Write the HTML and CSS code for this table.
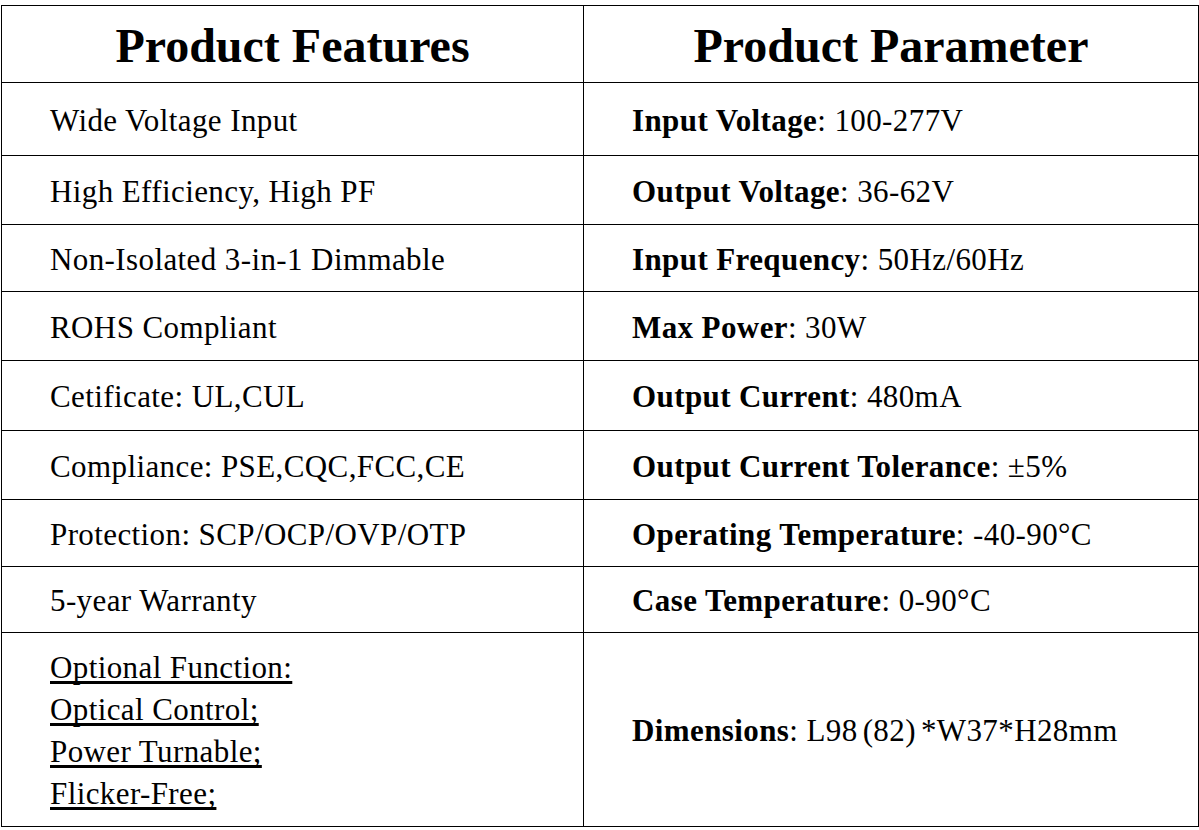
FILE: index.html
```html
<!DOCTYPE html>
<html>
<head>
<meta charset="utf-8">
<link rel="stylesheet" href="styles.css">
</head>
<body>
<table class="spec">
  <colgroup><col class="c-left"><col class="c-right"></colgroup>
  <thead>
    <tr class="r-head"><th>Product Features</th><th>Product Parameter</th></tr>
  </thead>
  <tbody>
    <tr class="r1"><td class="feat">Wide Voltage Input</td><td class="param"><b>Input Voltage</b>: 100-277V</td></tr>
    <tr class="r2"><td class="feat">High Efficiency, High PF</td><td class="param"><b>Output Voltage</b>: 36-62V</td></tr>
    <tr class="r3"><td class="feat">Non-Isolated 3-in-1 Dimmable</td><td class="param"><b>Input Frequency</b>: 50Hz/60Hz</td></tr>
    <tr class="r4"><td class="feat">ROHS Compliant</td><td class="param"><b>Max Power</b>: 30W</td></tr>
    <tr class="r5"><td class="feat">Cetificate: UL,CUL</td><td class="param"><b>Output Current</b>: 480mA</td></tr>
    <tr class="r6"><td class="feat">Compliance: PSE,CQC,FCC,CE</td><td class="param"><b>Output Current Tolerance</b>: ±5%</td></tr>
    <tr class="r7"><td class="feat">Protection: SCP/OCP/OVP/OTP</td><td class="param"><b>Operating Temperature</b>: -40-90°C</td></tr>
    <tr class="r8"><td class="feat">5-year Warranty</td><td class="param"><b>Case Temperature</b>: 0-90°C</td></tr>
    <tr class="r9">
      <td class="feat opt">
        <span class="u">Optional Function:</span><br>
        <span class="u">Optical Control;</span><br>
        <span class="u">Power Turnable;</span><br>
        <span class="u">Flicker-Free;</span>
      </td>
      <td class="param"><b>Dimensions</b>: L98<span class="gap"> </span>(82)<span class="gap"> </span>*W37*H28mm</td>
    </tr>
  </tbody>
</table>
</body>
</html>
```

FILE: styles.css
```css
html, body {
  margin: 0;
  padding: 0;
  background: #fff;
}
body {
  padding: 5px 0 0 1px;
  font-family: "Liberation Serif", "Times New Roman", serif;
  color: #000;
}
.spec {
  border-collapse: collapse;
  table-layout: fixed;
  width: 1197px;
}
.c-left { width: 582px; }
.c-right { width: 615px; }
.spec th, .spec td {
  border: 1px solid #000;
  padding: 0;
  vertical-align: middle;
}
.spec th {
  font-size: 48px;
  font-weight: bold;
  text-align: center;
  padding-top: 2px;
}
.spec td {
  font-size: 31px;
  letter-spacing: 0.4px;
  text-align: left;
  padding: 3px 0 0 48px;
}
.spec b { font-weight: bold; }
.r-head { height: 77px; }
.r1 { height: 73px; }
.r2 { height: 69px; }
.r3 { height: 67px; }
.r4 { height: 69px; }
.r5 { height: 70px; }
.r6 { height: 69px; }
.r7 { height: 67px; }
.r8 { height: 66px; }
.r9 { height: 194px; }
.opt { line-height: 42px; }
.u {
  text-decoration: underline;
  text-decoration-skip-ink: none;
  text-underline-offset: 3px;
}
.gap { display: inline-block; width: 5px; }
```
